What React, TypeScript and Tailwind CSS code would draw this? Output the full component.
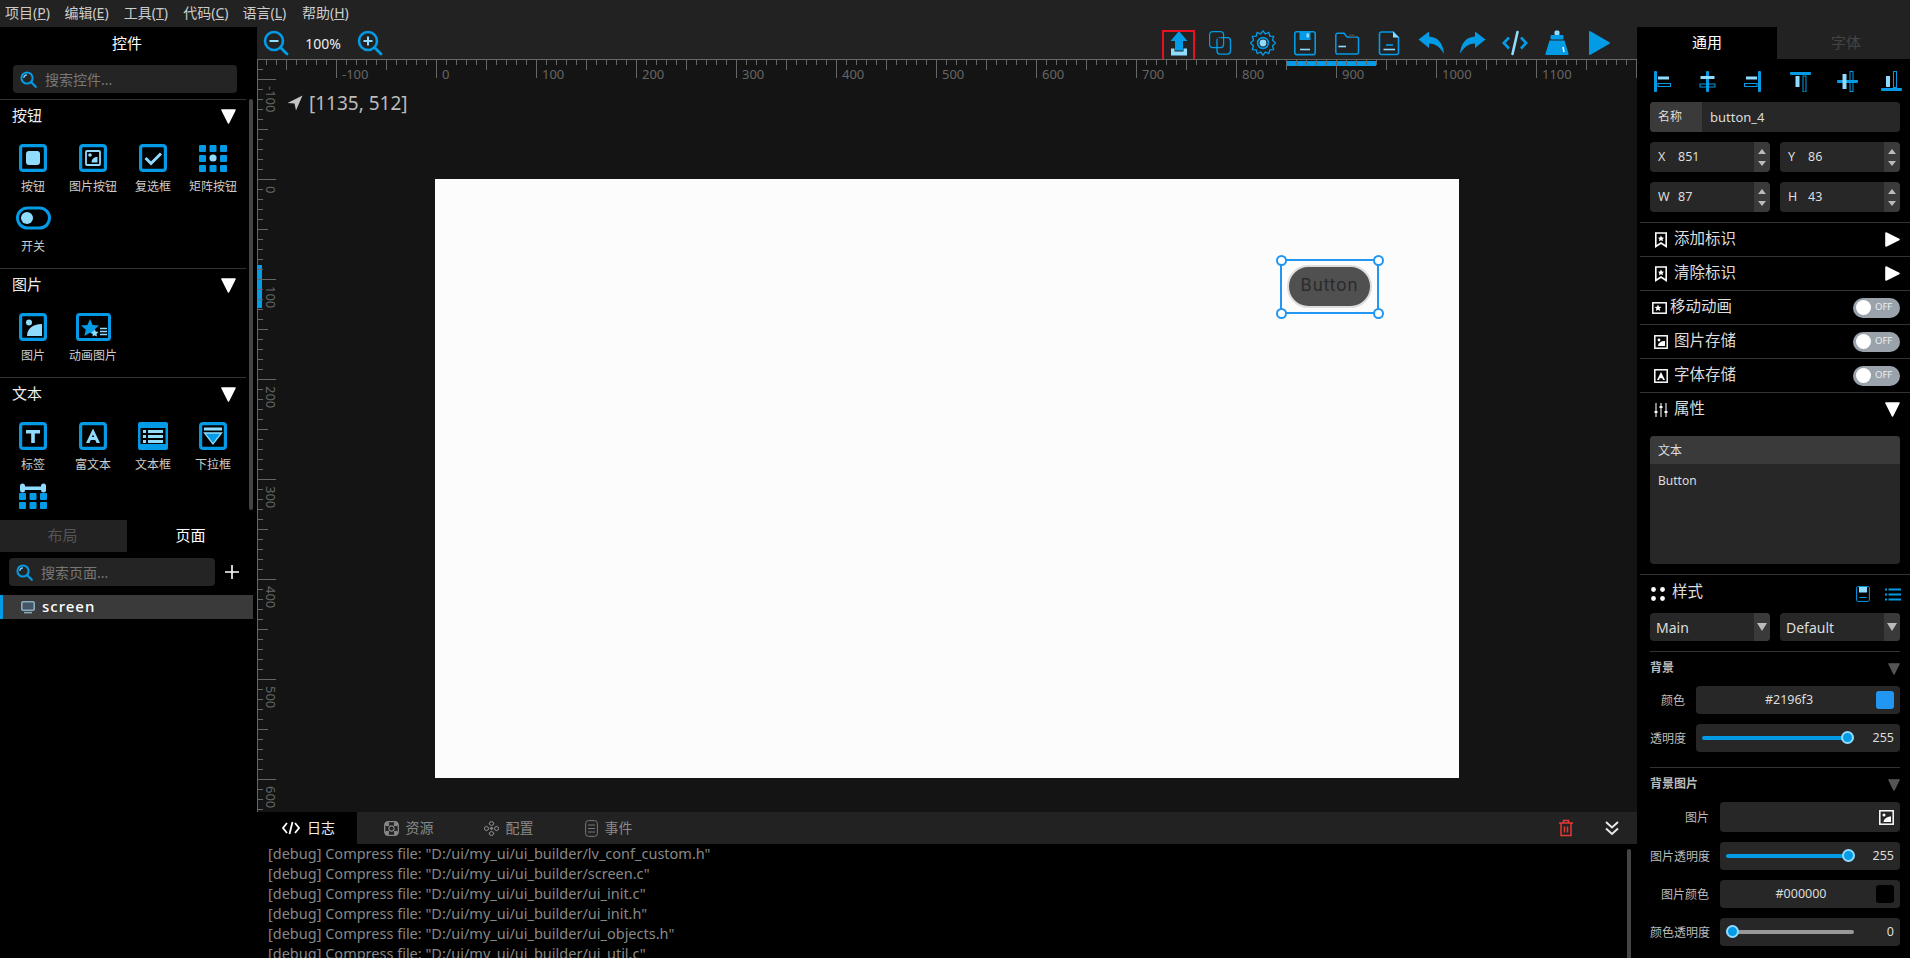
import React from "react";

const B = "#039be5";
const L = "#8fdcff";

type P = { children: React.ReactNode; s?: number; w?: number; h?: number; vb?: string };
const Svg = ({ children, s = 28, w, h, vb }: P) => (
  <svg width={w ?? s} height={h ?? s} viewBox={vb ?? `0 0 ${w ?? s} ${h ?? s}`} fill="none" className="shrink-0 block">
    {children}
  </svg>
);

const Frame = () => <rect x="1.6" y="1.6" width="24.8" height="24.8" rx="2.5" stroke={B} strokeWidth="3.2" />;

const widgetIcons: Record<string, React.ReactNode> = {
  button: (
    <Svg>
      <Frame />
      <rect x="7" y="7" width="14" height="14" rx="3" fill={L} />
    </Svg>
  ),
  imgbtn: (
    <Svg>
      <Frame />
      <rect x="7" y="7" width="14" height="14" rx="1" stroke={L} strokeWidth="1.8" />
      <circle cx="11" cy="11" r="1.8" fill={L} />
      <path d="M12.5 18.5 C12.5 15 15 13 18.5 13 V18.5 Z" fill={L} />
    </Svg>
  ),
  check: (
    <Svg>
      <Frame />
      <path d="M6.5 14 L12 19.5 L22 9.5" stroke={L} strokeWidth="3" />
    </Svg>
  ),
  matrix: (
    <Svg>
      {[1, 11, 21].map((y) =>
        [0, 10.5, 21].map((x) =>
          x === 10.5 && y === 11 ? (
            <circle key={`${x}${y}`} cx="14" cy="14" r="3.6" fill={L} />
          ) : (
            <rect key={`${x}${y}`} x={x} y={y} width="7" height="7" rx="1" fill={B} />
          ),
        ),
      )}
    </Svg>
  ),
  toggle: (
    <Svg w={35} h={28}>
      <rect x="1.5" y="4" width="32" height="20" rx="10" stroke={B} strokeWidth="3" />
      <circle cx="11" cy="14" r="6" fill={L} />
    </Svg>
  ),
  image: (
    <Svg>
      <Frame />
      <circle cx="10" cy="9.5" r="3" fill={L} />
      <path d="M8 23 C8 16 13 11 23 11 V23 Z" fill={L} />
    </Svg>
  ),
  anim: (
    <Svg w={35} h={28}>
      <rect x="1.5" y="1.5" width="32" height="25" rx="2" stroke={B} strokeWidth="3" />
      <path d="M14 6 L16.6 12 L23 12.6 L18.2 16.8 L19.6 23 L14 19.8 L8.4 23 L9.8 16.8 L5 12.6 L11.4 12 Z" fill={B} />
      <path d="M18.5 16 L19.8 18.6 L22.5 19 L20.5 21 L21 23.6 L18.5 22.3 L16.5 23.6 L16.8 21 L15 19 L17.5 18.6 Z" fill={L} />
      <path d="M24 15.5 H31 M24 18.5 H31 M24 21.5 H31" stroke={L} strokeWidth="1.4" />
    </Svg>
  ),
  label: (
    <Svg>
      <Frame />
      <path d="M7 8 H21 V11.5 H15.8 V21 H12.2 V11.5 H7 Z" fill={L} />
    </Svg>
  ),
  rich: (
    <Svg>
      <Frame />
      <path d="M14 6.5 L21 21 H17.6 L16.2 18 H11.8 L10.4 21 H7 Z M12.9 15 H15.1 L14 12.4 Z" fill={L} />
    </Svg>
  ),
  textarea: (
    <Svg w={30} h={28}>
      <rect x="0" y="0" width="30" height="28" rx="2" fill={B} />
      <rect x="2.5" y="2.5" width="25" height="23" fill="#000" />
      <rect x="5" y="8" width="3" height="3" fill={L} />
      <rect x="10" y="8" width="15" height="3" fill={L} />
      <rect x="5" y="13" width="3" height="3" fill={L} />
      <rect x="10" y="13" width="15" height="3" fill={L} />
      <rect x="5" y="18" width="3" height="3" fill={L} />
      <rect x="10" y="18" width="15" height="3" fill={L} />
      <rect x="2" y="2" width="26" height="4" fill={B} />
      <rect x="2" y="22" width="26" height="4" fill={B} />
    </Svg>
  ),
  dropdown: (
    <Svg>
      <Frame />
      <rect x="5" y="5.5" width="18" height="3" fill={L} />
      <path d="M5.5 11 H22.5 L14 22 Z" fill={B} stroke={L} strokeWidth="1.3" />
    </Svg>
  ),
  calendar: (
    <Svg>
      <rect x="2" y="4.5" width="24" height="3.4" rx="1.7" fill={L} />
      <rect x="1" y="1.5" width="5" height="9" rx="2.5" fill={L} />
      <rect x="22" y="1.5" width="5" height="9" rx="2.5" fill={L} />
      {[11, 20].map((y) =>
        [0, 10.5, 21].map((x) => <rect key={`${x}${y}`} x={x} y={y} width="7" height="7" rx="1" fill={B} />),
      )}
    </Svg>
  ),
};

const Down = ({ c = "#fff", w = 15, h = 15 }: { c?: string; w?: number; h?: number }) => (
  <svg width={w} height={h} viewBox="0 0 15 15" className="shrink-0 block">
    <path d="M1 1 H14 L7.5 14 Z" fill={c} stroke={c} strokeWidth="1.6" strokeLinejoin="round" />
  </svg>
);
const RightTri = () => (
  <svg width="15" height="15" viewBox="0 0 15 15" className="shrink-0 block">
    <path d="M1 1 V14 L14 7.5 Z" fill="#fff" stroke="#fff" strokeWidth="1.6" strokeLinejoin="round" />
  </svg>
);
const Search = () => (
  <svg width="17" height="17" viewBox="0 0 17 17" fill="none" className="shrink-0 block">
    <circle cx="7" cy="7" r="5.6" stroke={B} strokeWidth="2" />
    <path d="M3.8 7 A3.2 3.2 0 0 1 7 3.8" stroke={L} strokeWidth="1.2" />
    <path d="M11 11 L15.8 15.8" stroke={B} strokeWidth="2.2" strokeLinecap="round" />
  </svg>
);

function Widget({ icon, label }: { icon: string; label?: string }) {
  return (
    <div className="h-[60px] flex flex-col items-center">
      <div className="h-[28px] flex items-center justify-center">{widgetIcons[icon]}</div>
      {label && <div className="mt-[7px] h-[16px] leading-[16px] text-[12px] text-[#ccc] whitespace-nowrap">{label}</div>}
    </div>
  );
}

function Section({ title, items }: { title: string; items: [string, string?][] }) {
  return (
    <div className="border-t border-[#333] w-[246px] pb-[4px] box-content">
      <div className="h-[33px] flex items-center justify-between pl-[12px] pr-[10px]">
        <span className="text-[15px] text-[#eee] pb-[2px]">{title}</span>
        <Down />
      </div>
      <div className="grid grid-cols-[60px_60px_60px_60px] pl-[3px] pt-[11px]">
        {items.map(([i, l]) => (
          <Widget key={i} icon={i} label={l} />
        ))}
      </div>
    </div>
  );
}

function LeftPanel() {
  return (
    <div className="w-[257px] shrink-0 bg-black flex flex-col">
      <div className="relative h-[493px] overflow-hidden shrink-0">
        <div className="h-[32px] flex items-center justify-center text-[15px] text-white w-[254px]">控件</div>
        <div className="mt-[6px] ml-[13px] w-[224px] h-[28px] rounded-[4px] bg-[#242424] flex items-center pl-[7px] gap-[8px] text-[14px] text-[#777]">
          <Search />
          <span>搜索控件...</span>
        </div>
        <div className="h-[6px]" />
        <Section
          title="按钮"
          items={[["button", "按钮"], ["imgbtn", "图片按钮"], ["check", "复选框"], ["matrix", "矩阵按钮"], ["toggle", "开关"]]}
        />
        <Section title="图片" items={[["image", "图片"], ["anim", "动画图片"]]} />
        <Section
          title="文本"
          items={[["label", "标签"], ["rich", "富文本"], ["textarea", "文本框"], ["dropdown", "下拉框"], ["calendar"]]}
        />
        <div className="absolute left-[249px] top-[72px] w-[4px] h-[411px] rounded-[2px] bg-[#444]" />
      </div>
      <div className="h-[32px] flex text-[15px] shrink-0">
        <div className="w-[127px] bg-[#222] text-[#555] flex items-center justify-center pr-[2px] pb-[2px]">布局</div>
        <div className="w-[127px] text-white flex items-center justify-center pb-[2px]">页面</div>
      </div>
      <div className="mt-[6px] flex items-center shrink-0">
        <div className="ml-[9px] w-[206px] h-[28px] rounded-[4px] bg-[#242424] flex items-center pl-[7px] gap-[8px] text-[14px] text-[#777]">
          <Search />
          <span>搜索页面...</span>
        </div>
        <svg width="14" height="14" viewBox="0 0 14 14" className="ml-[10px] block">
          <path d="M7 0 V14 M0 7 H14" stroke="#fff" strokeWidth="1.6" />
        </svg>
      </div>
      <div className="mt-[9px] w-[253px] h-[24px] bg-[#3a3a3a] border-l-[3px] border-[#039be5] flex items-center pl-[18px] gap-[7px] shrink-0">
        <svg width="14" height="13" viewBox="0 0 14 13" fill="none" className="block">
          <rect x="0.8" y="0.8" width="12.4" height="8.4" rx="1" stroke="#8ab" strokeWidth="1.6" fill="#456" />
          <path d="M3 11.6 H11" stroke="#8ab" strokeWidth="1.6" />
        </svg>
        <span className="text-[15px] font-medium text-white tracking-[1px] pb-[2px]">screen</span>
      </div>
    </div>
  );
}

const tb: React.ReactNode[] = [
  <Svg s={26}>
    <path d="M13 1 L21.5 11 H17 V20.5 H9 V11 H4.5 Z" fill={B} />
    <path d="M5 18.5 H8.5 V21.5 H17.5 V18.5 H21 V25.5 H5 Z" fill={L} />
  </Svg>,
  <Svg s={26}>
    <rect x="1.6" y="1.6" width="14" height="16" rx="3" stroke={B} strokeWidth="1.2" />
    <rect x="9" y="7.6" width="13.5" height="16.5" rx="3" stroke={B} strokeWidth="1.4" />
    <path d="M9.6 7.5 V12 C9.6 9 12 7.5 15 7.5 Z" fill="#222" />
  </Svg>,
  <Svg s={26}>
    <path
      d="M13 0.8 L15.4 4 L18.9 2.4 L19.7 6.2 L23.7 6.3 L22.5 10.3 L25.6 13 L22.5 15.7 L23.7 19.7 L19.7 19.8 L18.9 23.6 L15.4 22 L13 25.2 L10.6 22 L7.1 23.6 L6.3 19.8 L2.3 19.7 L3.5 15.7 L0.4 13 L3.5 10.3 L2.3 6.3 L6.3 6.2 L7.1 2.4 L10.6 4 Z"
      stroke={B}
      strokeWidth="1.3"
      strokeLinejoin="round"
    />
    <circle cx="13" cy="13" r="5.4" stroke={B} strokeWidth="1.6" />
    <circle cx="13" cy="13" r="3.4" fill={L} />
  </Svg>,
  <Svg s={26}>
    <rect x="2.8" y="1.8" width="20.4" height="22.8" rx="2" stroke={B} strokeWidth="1.6" />
    <path d="M7.5 2 H18.5 V10 H7.5 Z" fill={B} />
    <rect x="14.5" y="3.5" width="2.5" height="4" fill={L} />
    <path d="M8 19.5 H18" stroke={L} strokeWidth="1.6" />
  </Svg>,
  <Svg s={26}>
    <path d="M1.8 5 A1.8 1.8 0 0 1 3.6 3.2 H10 L13 7 H22.5 A2 2 0 0 1 24.5 9 V22 A2 2 0 0 1 22.5 24 H3.6 A1.8 1.8 0 0 1 1.8 22 Z" stroke={B} strokeWidth="1.5" />
    <path d="M15 4.5 H20 L22.5 7 H16 Z" fill="#444" />
    <path d="M4.5 16.5 H12" stroke={L} strokeWidth="1.6" />
  </Svg>,
  <Svg s={26}>
    <path d="M5.5 2 H17 L22.5 7.5 V22.5 A2 2 0 0 1 20.5 24.5 H5.5 A2 2 0 0 1 3.5 22.5 V4 A2 2 0 0 1 5.5 2 Z" stroke={B} strokeWidth="1.6" />
    <path d="M17 1.5 L23 7.5 H17 Z" fill={L} />
    <path d="M10 15 H17" stroke={B} strokeWidth="1.6" />
    <path d="M7.5 19.5 H19" stroke={L} strokeWidth="1.6" />
  </Svg>,
  <Svg s={26}>
    <path d="M0.5 9.5 L11 1.5 V6.5 C19 7 25 12 26 24 C22 17 18 14 11 13.5 V18 Z" fill={B} />
  </Svg>,
  <Svg s={26}>
    <path d="M25.5 9.5 L15 1.5 V6.5 C7 7 1 12 0 24 C4 17 8 14 15 13.5 V18 Z" fill={B} />
  </Svg>,
  <Svg s={26}>
    <path d="M7 7.5 L1.8 13 L7 18.5 M19 7.5 L24.2 13 L19 18.5" stroke={B} strokeWidth="2.6" fill="none" />
    <path d="M15.5 2 L10.5 24" stroke={L} strokeWidth="2.6" strokeLinecap="round" />
  </Svg>,
  <Svg s={26}>
    <rect x="10.5" y="0.5" width="5" height="5" rx="1.5" fill={L} />
    <rect x="6.5" y="5" width="13" height="4.5" rx="1" fill={B} />
    <path d="M5.5 10.5 H20.5 L24.5 23.5 A1 1 0 0 1 23.5 25 H2.5 A1 1 0 0 1 1.5 23.5 Z" fill={B} />
    <path d="M19 17 L20 22" stroke="#fff" strokeWidth="1.5" />
  </Svg>,
  <Svg s={26}>
    <path d="M4 2 L23 13 L4 24 Z" fill={B} stroke={B} strokeWidth="2" strokeLinejoin="round" />
  </Svg>,
];

function Zoom({ plus }: { plus?: boolean }) {
  return (
    <svg width="26" height="26" viewBox="0 0 26 26" fill="none" className="block">
      <circle cx="11" cy="11" r="9" stroke={B} strokeWidth="2.6" />
      <path d="M6.5 11 H15.5" stroke={L} strokeWidth="2" />
      {plus && <path d="M11 6.5 V15.5" stroke={L} strokeWidth="2" />}
      <path d="M17.5 17.5 L24 24" stroke={B} strokeWidth="2.8" strokeLinecap="round" />
    </svg>
  );
}

function Toolbar() {
  return (
    <div className="h-[32px] bg-[#222] flex items-center shrink-0">
      <div className="ml-[6px]">
        <Zoom />
      </div>
      <span className="w-[68px] text-center text-[14px] text-[#eee]">100%</span>
      <Zoom plus />
      <div className="flex-1 flex justify-end pr-[17px]">
        {tb.map((t, i) => (
          <div key={i} className="relative w-[42px] h-[32px] flex items-center justify-center">
            {t}
            {i === 0 && <div className="absolute left-[4px] top-[3px] w-[33px] h-[31px] border-2 border-[#e81123]" />}
          </div>
        ))}
      </div>
    </div>
  );
}

const range = (a: number, b: number, step: number) => {
  const out: number[] = [];
  for (let i = a; i <= b; i += step) out.push(i);
  return out;
};

function Rulers() {
  const ox = 179;
  const oy = 120;
  const tick = (v: number) => (v % 100 === 0 ? 19 : v % 50 === 0 ? 11 : 6);
  return (
    <svg width="1380" height="753" className="absolute left-0 top-0 block">
      <path d="M0 0.5 H1380" stroke="#666" />
      <path d="M0.5 0 V753" stroke="#666" />
      <rect x={ox + 851} y="2" width="89" height="5" fill={B} />
      <rect x="0" y={oy + 86} width="5" height="43" fill={B} />
      {range(-170, 1200, 10).map((v) => (
        <path key={v} d={`M${ox + v + 0.5} 0 V${tick(v)}`} stroke="#666" />
      ))}
      {range(-110, 630, 10).map((v) => (
        <path key={v} d={`M0 ${oy + v + 0.5} H${tick(v)}`} stroke="#666" strokeWidth="1" />
      ))}
      {range(-100, 1100, 100).map((v) => (
        <text key={v} x={ox + v + 6} y="20" fontSize="13" fill="#666">
          {v}
        </text>
      ))}
      {range(-100, 600, 100).map((v) => (
        <text key={v} transform={`translate(9 ${oy + v + 7}) rotate(90)`} fontSize="13" fill="#666">
          {v}
        </text>
      ))}
    </svg>
  );
}

const Handle = ({ cls }: { cls: string }) => (
  <div className={`absolute w-[11px] h-[11px] rounded-full bg-white border-2 border-[#2196f3] ${cls}`} />
);

function CanvasArea() {
  return (
    <div className="relative flex-1 bg-[#141414] overflow-hidden">
      <Rulers />
      <div className="absolute left-[30px] top-[34px] flex items-center gap-[6px] text-[19px] leading-[20px] text-[#bbb]">
        <svg width="16" height="16" viewBox="0 0 16 16" className="block">
          <path d="M15.5 0.5 L0.5 8 L7.5 8.5 L9 15.5 Z" fill="#c4c4c4" />
        </svg>
        <span>[1135, 512]</span>
      </div>
      <div className="absolute left-[178px] top-[120px] w-[1024px] h-[599px] bg-[#fcfcfc]" />
      <div className="absolute left-[1023px] top-[200px] w-[99px] h-[55px] border-2 border-[#2196f3]">
        <Handle cls="-left-[6.5px] -top-[6.5px]" />
        <Handle cls="-right-[6.5px] -top-[6.5px]" />
        <Handle cls="-left-[6.5px] -bottom-[6.5px]" />
        <Handle cls="-right-[6.5px] -bottom-[6.5px]" />
        <div className="absolute left-[5px] top-[4px] w-[85px] h-[43px] rounded-full bg-[#505050] border-2 border-[#ddd] flex items-center justify-center pb-[2px] text-[17px] text-[#2a2a2a] tracking-[1px] font-['Inter',sans-serif]">
          Button
        </div>
      </div>
    </div>
  );
}

const logs = [
  "lv_conf_custom.h",
  "screen.c",
  "ui_init.c",
  "ui_init.h",
  "ui_objects.h",
  "ui_util.c",
];

function BottomPanel() {
  const tabs: [string, React.ReactNode][] = [
    [
      "日志",
      <svg width="18" height="14" viewBox="0 0 18 14" fill="none" className="block">
        <path d="M5 2 L1 7 L5 12 M13 2 L17 7 L13 12 M10.5 1 L7.5 13" stroke="#fff" strokeWidth="1.8" />
      </svg>,
    ],
    [
      "资源",
      <svg width="15" height="15" viewBox="0 0 15 15" fill="none" className="block">
        <rect x="0.7" y="0.7" width="13.6" height="13.6" rx="3.5" stroke="#888" strokeWidth="1.3" />
        <circle cx="3" cy="3" r="2.2" fill="#888" />
        <circle cx="12" cy="3" r="2.2" fill="#888" />
        <circle cx="3" cy="12" r="2.2" fill="#888" />
        <circle cx="12" cy="12" r="2.2" fill="#888" />
        <circle cx="7.5" cy="7.5" r="2.6" stroke="#888" strokeWidth="1.1" />
        <path d="M3 3 L5.5 5.5 M12 3 L9.5 5.5 M3 12 L5.5 9.5 M12 12 L9.5 9.5" stroke="#888" />
      </svg>,
    ],
    [
      "配置",
      <svg width="15" height="15" viewBox="0 0 15 15" fill="none" className="block">
        <rect x="5.7" y="0.7" width="3.6" height="3.6" rx="0.8" transform="rotate(45 7.5 2.5)" stroke="#888" />
        <rect x="5.7" y="10.7" width="3.6" height="3.6" rx="0.8" transform="rotate(45 7.5 12.5)" stroke="#888" />
        <rect x="0.7" y="5.7" width="3.6" height="3.6" rx="0.8" transform="rotate(45 2.5 7.5)" stroke="#888" />
        <rect x="10.7" y="5.7" width="3.6" height="3.6" rx="0.8" transform="rotate(45 12.5 7.5)" stroke="#888" />
        <circle cx="7.5" cy="7.5" r="1.4" fill="#888" />
      </svg>,
    ],
    [
      "事件",
      <svg width="13" height="17" viewBox="0 0 13 17" fill="none" className="block">
        <rect x="0.6" y="0.6" width="11.8" height="15.8" rx="3" stroke="#777" />
        <path d="M3 5 H10 M3 8.5 H10 M3 12 H10" stroke="#777" />
      </svg>,
    ],
  ];
  return (
    <div className="h-[146px] shrink-0 flex flex-col bg-black">
      <div className="h-[32px] bg-[#222] flex items-center shrink-0">
        {tabs.map(([t, ic], i) => (
          <div
            key={t}
            className={`w-[100px] h-full flex items-center justify-center gap-[7px] text-[14px] pl-[3px] ${i === 0 ? "bg-black text-[#eee]" : "text-[#888]"}`}
          >
            {ic}
            <span className="pb-[2px]">{t}</span>
          </div>
        ))}
        <div className="flex-1 flex items-center justify-end pr-[17px] gap-[30px]">
          <svg width="16" height="18" viewBox="0 0 16 18" fill="none" className="block">
            <path d="M1 4 H15 M5.5 4 V1.5 H10.5 V4 M3 4 V16.5 H13 V4 M6.5 7.5 V13.5 M9.5 7.5 V13.5" stroke="#e53935" strokeWidth="1.5" />
          </svg>
          <svg width="16" height="16" viewBox="0 0 16 16" fill="none" className="block">
            <path d="M2 2 L8 7.5 L14 2 M2 8.5 L8 14 L14 8.5" stroke="#e8e8e8" strokeWidth="2" />
          </svg>
        </div>
      </div>
      <div className="relative flex-1 overflow-hidden pl-[11px]">
        <div className="-mt-[1px] text-[14.5px] leading-[20px] text-[#888] whitespace-nowrap">
          {logs.map((l) => (
            <div key={l}>{`[debug] Compress file: "D:/ui/my_ui/ui_builder/${l}"`}</div>
          ))}
        </div>
        <div className="absolute right-[6px] top-[5px] w-[4px] h-full bg-[#444] rounded-[2px]" />
      </div>
    </div>
  );
}

const Spin = () => (
  <div className="w-[16px] h-full bg-[#3a3a3a] flex flex-col items-center justify-center gap-[7px] rounded-r-[4px]">
    <svg width="8" height="5" viewBox="0 0 8 5" className="block">
      <path d="M4 0 L8 5 H0 Z" fill="#bbb" />
    </svg>
    <svg width="8" height="5" viewBox="0 0 8 5" className="block">
      <path d="M0 0 H8 L4 5 Z" fill="#bbb" />
    </svg>
  </div>
);

const NumBox = ({ k, v }: { k: string; v: string }) => (
  <div className="w-[120px] h-[30px] bg-[#272727] rounded-[4px] flex items-center text-[12.5px] text-[#ddd] overflow-hidden">
    <span className="pl-[8px] w-[28px] pt-[1px]">{k}</span>
    <span className="flex-1 pt-[1px]">{v}</span>
    <Spin />
  </div>
);

const Toggle = () => (
  <div className="w-[47px] h-[20px] rounded-full bg-[#9aa3ab] flex items-center pl-[3px] gap-[4px]">
    <div className="w-[15px] h-[15px] rounded-full bg-white" />
    <span className="text-[9.5px] text-[#eee]">OFF</span>
  </div>
);

const Bookmark = () => (
  <svg width="14" height="16" viewBox="0 0 14 16" fill="none" className="block">
    <path d="M1.8 1 H12.2 V14.5 L7 11 L1.8 14.5 Z" stroke="#fff" strokeWidth="1.6" />
    <path d="M7 3.6 L8 5.6 L10 5.8 L8.6 7.2 L9 9.2 L7 8.2 L5 9.2 L5.4 7.2 L4 5.8 L6 5.6 Z" fill="#fff" />
  </svg>
);

function Row({ icon, text, right, gap = "pl-[14px] gap-[6px]" }: { icon: React.ReactNode; text: string; right: React.ReactNode; gap?: string }) {
  return (
    <div className={`ml-[3px] h-[34px] border-t border-[#333] flex items-center pr-[10px] ${gap}`}>
      {icon}
      <span className="flex-1 text-[15.5px] text-[#ddd] pb-[2px]">{text}</span>
      {right}
    </div>
  );
}

const aligns: [string, React.ReactNode][] = [
  [
    "",
    <>
      <rect x="2" y="0" width="3" height="21" rx="1" fill={B} />
      <rect x="6" y="5.5" width="11" height="3" fill={L} />
      <rect x="6" y="12.5" width="12.5" height="3" stroke={B} strokeWidth="1" fill="none" />
    </>,
  ],
  [
    "",
    <>
      <rect x="9" y="0" width="3" height="21" rx="1" fill={B} />
      <rect x="3.5" y="5" width="14" height="3" fill={L} />
      <rect x="3" y="13" width="15" height="3" stroke={B} strokeWidth="1" fill="none" />
    </>,
  ],
  [
    "",
    <>
      <rect x="16" y="0" width="3" height="21" rx="1" fill={B} />
      <rect x="4" y="5.5" width="11" height="3" fill={L} />
      <rect x="2.5" y="12.5" width="12.5" height="3" stroke={B} strokeWidth="1" fill="none" />
    </>,
  ],
  [
    "ml-[3px]",
    <>
      <rect x="0" y="1" width="21" height="3" rx="1" fill={B} />
      <rect x="5.5" y="5" width="4" height="11" fill={L} />
      <rect x="13" y="5" width="3" height="16" stroke={B} strokeWidth="1" fill="none" />
    </>,
  ],
  [
    "ml-[2px]",
    <>
      <rect x="0" y="9" width="21" height="3" rx="1" fill={B} />
      <rect x="5.5" y="3" width="4" height="15" fill={L} />
      <rect x="13" y="0.5" width="3" height="20" stroke={B} strokeWidth="1" fill="none" />
    </>,
  ],
  [
    "-ml-[1px]",
    <>
      <rect x="0" y="17" width="21" height="3" rx="1" fill={B} />
      <rect x="5" y="5" width="4" height="11" fill={L} />
      <rect x="12.5" y="0.5" width="3" height="16" stroke={B} strokeWidth="1" fill="none" />
    </>,
  ],
];

const Slider = ({ pct, track, value }: { pct: number; track: string; value: string }) => (
  <>
    <div className={`relative flex-1 h-[4px] rounded-full ${track}`}>
      <div
        className="absolute top-[-5.5px] w-[13px] h-[13px] rounded-full bg-[#039be5] border-2 border-[#8fdcff]"
        style={{ left: `calc(${pct}% - 6.5px)` }}
      />
    </div>
    <span className="w-[40px] text-right text-[12.5px] text-[#ddd]">{value}</span>
  </>
);

function PropRow({ label, lw, children, h = "h-[28px]", cls = "" }: { label: string; lw: string; children: React.ReactNode; h?: string; cls?: string }) {
  return (
    <div className={`flex items-center ${cls}`}>
      <div className={`${lw} text-right text-[12px] text-[#bbb] whitespace-nowrap pt-[1px]`}>{label}</div>
      <div className={`flex-1 ml-[11px] ${h} bg-[#272727] rounded-[4px] flex items-center px-[6px] text-[12.5px] text-[#ddd]`}>{children}</div>
    </div>
  );
}

function RightPanel() {
  return (
    <div className="w-[273px] shrink-0 bg-black flex flex-col overflow-hidden">
      <div className="h-[32px] flex text-[15px] shrink-0">
        <div className="w-[140px] text-white flex items-center justify-center pb-[2px]">通用</div>
        <div className="flex-1 bg-[#222] text-[#444] flex items-center justify-center pl-[5px] pb-[2px]">字体</div>
      </div>
      <div className="h-[43px] pt-[12px] pl-[15px] flex gap-[24px]">
        {aligns.map(([c, a], i) => (
          <svg key={i} width="21" height="21" viewBox="0 0 21 21" className={`block shrink-0 ${c}`}>
            {a}
          </svg>
        ))}
      </div>
      <div className="ml-[13px] mr-[10px] h-[30px] rounded-[4px] bg-[#272727] flex items-center overflow-hidden text-[13px] text-[#ddd]">
        <div className="w-[52px] h-full bg-[#3a3a3a] flex items-center pl-[8px] text-[12px]">名称</div>
        <div className="pl-[8px] pt-[1px]">button_4</div>
      </div>
      <div className="ml-[13px] mr-[10px] mt-[10px] flex gap-[10px]">
        <NumBox k="X" v="851" />
        <NumBox k="Y" v="86" />
      </div>
      <div className="ml-[13px] mr-[10px] mt-[10px] flex gap-[10px]">
        <NumBox k="W" v="87" />
        <NumBox k="H" v="43" />
      </div>
      <div className="h-[10px]" />
      <Row icon={<Bookmark />} text="添加标识" right={<RightTri />} />
      <Row icon={<Bookmark />} text="清除标识" right={<RightTri />} />
      <Row
        gap="pl-[12px] gap-[3px]"
        icon={
          <svg width="15" height="14" viewBox="0 0 15 14" fill="none" className="block">
            <rect x="0.8" y="1.8" width="13.4" height="10.4" stroke="#fff" strokeWidth="1.5" />
            <path d="M6 3.5 L7 5.8 L9.4 6 L7.6 7.6 L8.2 10 L6 8.7 L3.8 10 L4.4 7.6 L2.6 6 L5 5.8 Z" fill="#fff" />
          </svg>
        }
        text="移动动画"
        right={<Toggle />}
      />
      <Row
        icon={
          <svg width="14" height="14" viewBox="0 0 14 14" fill="none" className="block">
            <rect x="0.8" y="0.8" width="12.4" height="12.4" stroke="#fff" strokeWidth="1.5" />
            <circle cx="5" cy="5" r="1.4" fill="#fff" />
            <path d="M4 11 C4 8 7 6 11 6 V11 Z" fill="#fff" />
          </svg>
        }
        text="图片存储"
        right={<Toggle />}
      />
      <Row
        icon={
          <svg width="14" height="14" viewBox="0 0 14 14" fill="none" className="block">
            <rect x="0.8" y="0.8" width="12.4" height="12.4" stroke="#fff" strokeWidth="1.5" />
            <path d="M7 3 L11 11 H9 L8.2 9.3 H5.8 L5 11 H3 Z" fill="#fff" />
          </svg>
        }
        text="字体存储"
        right={<Toggle />}
      />
      <Row
        icon={
          <svg width="14" height="14" viewBox="0 0 14 14" fill="none" className="block">
            <path d="M2 0 V14 M7 0 V14 M12 0 V14" stroke="#ddd" strokeWidth="1.2" />
            <path d="M0.5 9 H3.5 M5.5 4 H8.5 M10.5 9 H13.5" stroke="#fff" strokeWidth="2" />
          </svg>
        }
        text="属性"
        right={<Down />}
      />
      <div className="mt-[10px] ml-[13px] mr-[10px] h-[128px] rounded-[4px] bg-[#272727] overflow-hidden text-[12px] text-[#ddd]">
        <div className="h-[28px] bg-[#3a3a3a] flex items-center pl-[8px] pt-[1px]">文本</div>
        <div className="pl-[8px] pt-[8px]">Button</div>
      </div>
      <div className="mt-[10px] ml-[3px] h-[39px] border-t border-[#333] flex items-center pl-[11px] pr-[9px]">
        <svg width="14" height="14" viewBox="0 0 14 14" className="block mr-[7px]">
          <circle cx="2.5" cy="2.5" r="2.4" fill="#fff" />
          <circle cx="11.5" cy="2.5" r="2.4" fill="#fff" />
          <circle cx="2.5" cy="11.5" r="2.4" fill="#fff" />
          <circle cx="11.5" cy="11.5" r="2.4" fill="#fff" />
        </svg>
        <span className="flex-1 text-[15.5px] text-[#ddd] pb-[4px]">样式</span>
        <svg width="14" height="16" viewBox="0 0 14 16" fill="none" className="block mr-[15px]">
          <rect x="0.6" y="0.6" width="12.8" height="14.8" rx="1" stroke={B} />
          <path d="M3 1 H11 V6.5 H3 Z" fill={L} />
          <path d="M3.5 11.5 H10.5" stroke={B} />
        </svg>
        <svg width="16" height="13" viewBox="0 0 16 13" className="block">
          <path d="M0 1.5 H2 M3.5 1.5 H16 M0 6.5 H2 M3.5 6.5 H16 M0 11.5 H2 M3.5 11.5 H16" stroke={B} strokeWidth="2.2" />
        </svg>
      </div>
      <div className="ml-[13px] mr-[10px] flex gap-[10px]">
        {["Main", "Default"].map((t) => (
          <div key={t} className="w-[120px] h-[28px] bg-[#272727] rounded-[4px] flex items-center text-[14px] text-[#ddd] overflow-hidden">
            <span className="flex-1 pl-[6px]">{t}</span>
            <div className="w-[16px] h-full bg-[#3a3a3a] flex items-center justify-center">
              <svg width="10" height="8" viewBox="0 0 10 8" className="block">
                <path d="M0 0 H10 L5 8 Z" fill="#bbb" />
              </svg>
            </div>
          </div>
        ))}
      </div>
      <div className="ml-[13px] mr-[10px] mt-[10px] border-t border-[#333] h-[35px] flex items-center justify-between text-[12px] font-semibold text-[#bbb]">
        <span className="pb-[3px]">背景</span>
        <Down c="#555" w={12} h={12} />
      </div>
      <div className="ml-[13px] mr-[10px]">
        <PropRow label="颜色" lw="w-[35px]">
          <span className="flex-1 text-center">#2196f3</span>
          <div className="w-[18px] h-[18px] rounded-[3px] bg-[#2196f3]" />
        </PropRow>
        <PropRow label="透明度" lw="w-[35px]" cls="mt-[10px]">
          <Slider pct={96} track="bg-[#039be5]" value="255" />
        </PropRow>
        <div className="mt-[15px] border-t border-[#333] h-[35px] flex items-center justify-between text-[12px] font-semibold text-[#bbb]">
          <span className="pb-[3px]">背景图片</span>
          <Down c="#555" w={12} h={12} />
        </div>
        <PropRow label="图片" lw="w-[59px]" h="h-[30px]">
          <span className="flex-1" />
          <svg width="15" height="15" viewBox="0 0 15 15" fill="none" className="block">
            <rect x="0.8" y="0.8" width="13.4" height="13.4" stroke="#fff" strokeWidth="1.5" />
            <circle cx="5" cy="5" r="1.5" fill="#fff" />
            <path d="M4.5 12 C4.5 9 8 6.5 12 6.5 V12 Z" fill="#fff" />
          </svg>
        </PropRow>
        <PropRow label="图片透明度" lw="w-[59px]" cls="mt-[10px]">
          <Slider pct={95.5} track="bg-[#039be5]" value="255" />
        </PropRow>
        <PropRow label="图片颜色" lw="w-[59px]" cls="mt-[10px]">
          <span className="flex-1 text-center">#000000</span>
          <div className="w-[18px] h-[18px] rounded-[3px] bg-black" />
        </PropRow>
        <PropRow label="颜色透明度" lw="w-[59px]" cls="mt-[10px]">
          <Slider pct={4.7} track="bg-[#999]" value="0" />
        </PropRow>
      </div>
    </div>
  );
}

const menus: [string, string][] = [
  ["项目", "P"],
  ["编辑", "E"],
  ["工具", "T"],
  ["代码", "C"],
  ["语言", "L"],
  ["帮助", "H"],
];

export default function App() {
  return (
    <div className="w-[1910px] h-[958px] overflow-hidden bg-black flex flex-col font-['Noto_Sans','Noto_Sans_CJK_SC',sans-serif]">
      <div className="h-[27px] bg-[#222] flex items-center pl-[5px] text-[14px] text-[#ccc] shrink-0">
        {menus.map(([t, k]) => (
          <div key={k} className="w-[59.4px] pb-[2px]">
            {t}(<span className="underline">{k}</span>)
          </div>
        ))}
      </div>
      <div className="flex-1 flex min-h-0">
        <LeftPanel />
        <div className="flex-1 flex flex-col min-w-0">
          <Toolbar />
          <CanvasArea />
          <BottomPanel />
        </div>
        <RightPanel />
      </div>
    </div>
  );
}
